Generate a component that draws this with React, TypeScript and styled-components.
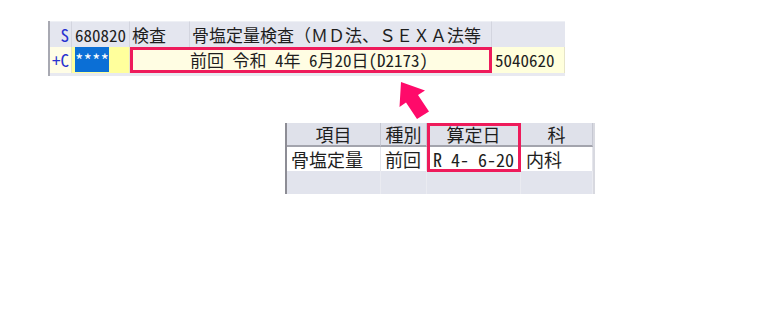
import React from "react";
import styled, { createGlobalStyle } from "styled-components";

const Global = createGlobalStyle`
  html, body { margin: 0; padding: 0; background: #ffffff; }
  body { font-family: "Noto Sans CJK JP", "Noto Sans", sans-serif; }
`;

const Page = styled.div`
  display: flex;
  flex-direction: column;
  width: 771px;
  height: 318px;
  padding-top: 21px;
  box-sizing: border-box;
  font-family: "Noto Sans CJK JP", sans-serif;
  font-feature-settings: "hwid";
  color: #1e1e1e;
`;

const TopGrid = styled.div`
  display: grid;
  grid-template-columns: 22px 58px 60px 302px 73px;
  grid-template-rows: 26px 26px 3px;
  margin-left: 48px;
  width: 517px;
  border-left: 2px solid #a8a9b2;
  font-size: 17px;
  line-height: 26px;
`;

const HeadCell = styled.div<{ $align?: string; $color?: string; $pad?: number; $last?: boolean; $fullwidth?: boolean }>`
  background: #e4e6ef;
  border-top: 1px solid #eef0f5;
  border-right: ${(p) => (p.$last ? "none" : "1px solid #d3d5df")};
  text-align: ${(p) => p.$align || "left"};
  color: ${(p) => p.$color || "#1e1e1e"};
  padding: 0 ${(p) => (p.$align === "right" ? 2 : 0)}px 0 ${(p) => p.$pad ?? 3}px;
  font-feature-settings: ${(p) => (p.$fullwidth ? "normal" : "\"hwid\"")};
  white-space: pre;
  overflow: hidden;
  line-height: 25px;
`;

const Cell = styled.div<{ $bg: string; $align?: string; $color?: string; $pad?: number }>`
  background: ${(p) => p.$bg};
  text-align: ${(p) => p.$align || "left"};
  color: ${(p) => p.$color || "#1e1e1e"};
  padding: 0 ${(p) => (p.$align === "right" ? 2 : 0)}px 0 ${(p) => p.$pad ?? 3}px;
  white-space: pre;
  overflow: hidden;
  border-right: 1px solid #e6e4c8;
`;

const Selected = styled.span`
  background: #0b6fd6;
  color: #ffffff;
`;

const MarkedCell = styled.div`
  grid-column: 3 / 5;
  background: #fffde3;
  border: 3px solid #ee1b5b;
  box-sizing: border-box;
  padding-left: 57px;
  line-height: 20px;
  white-space: pre;
`;

const Strip = styled.div`
  grid-column: 1 / 6;
  background: #e8e9f0;
`;

const ArrowRow = styled.div`
  height: 47px;
  padding: 3px 0 0 396px;
  box-sizing: border-box;
`;

const BottomWrap = styled.div`
  margin-left: 285px;
  display: flex;
`;

const BottomGrid = styled.div`
  display: grid;
  grid-template-columns: 94px 46px 94px 72px;
  grid-template-rows: 24px 24px 23px;
  border-left: 2px solid #8d8d95;
  font-size: 18px;
  line-height: 24px;
`;

const RightEdge = styled.div`
  width: 2px;
  height: 71px;
  background: #d8d9e0;
`;

const ColHead = styled.div<{ $col: number }>`
  grid-row: 1;
  grid-column: ${(p) => p.$col};
  background: #dfe1ea;
  border-bottom: 2px solid #a3a4ad;
  border-right: 1px solid #c6c8d2;
  text-align: center;
  line-height: 22px;
  box-sizing: border-box;
`;

const DataCell = styled.div<{ $col: number; $pad?: number }>`
  grid-row: 2;
  grid-column: ${(p) => p.$col};
  background: #ffffff;
  border-right: 1px solid #e5e6ec;
  padding-left: ${(p) => p.$pad ?? 3}px;
  white-space: pre;
  overflow: hidden;
`;

const EmptyCell = styled.div<{ $col: number }>`
  grid-row: 3;
  grid-column: ${(p) => p.$col};
  background: #e2e4ed;
  border-right: 1px solid #eaebf1;
`;

const Highlight = styled.div`
  grid-row: 1 / 3;
  grid-column: 3;
  border: 3px solid #ee1b5b;
  margin-bottom: -1px;
  z-index: 1;
  pointer-events: none;
`;

const Arrow = () => (
  <svg width="36" height="43" viewBox="0 0 36 43">
    <polygon
      points="5,3 29,11.5 22,16 33,32.5 21,40 10,23.5 3.5,28"
      fill="#ff0a6a"
    />
  </svg>
);

export default function App() {
  return (
    <>
      <Global />
      <Page>
        <TopGrid>
          <HeadCell $align="right" $color="#2a32d0" $pad={0}>S</HeadCell>
          <HeadCell>680820</HeadCell>
          <HeadCell $pad={2}>検査</HeadCell>
          <HeadCell $pad={2} $fullwidth>骨塩定量検査（ＭＤ法、ＳＥＸＡ法等</HeadCell>
          <HeadCell $last />

          <Cell $bg="#fffde6" $align="right" $color="#2a32d0" $pad={0}>+C</Cell>
          <Cell $bg="#ffff9c">
            <Selected>****</Selected>
          </Cell>
          <MarkedCell>{"前回 令和 4年 6月20日(D2173)"}</MarkedCell>
          <Cell $bg="#ffffdc">5040620</Cell>
          <Strip />
        </TopGrid>

        <ArrowRow>
          <Arrow />
        </ArrowRow>

        <BottomWrap>
          <BottomGrid>
            <ColHead $col={1}>項目</ColHead>
            <ColHead $col={2}>種別</ColHead>
            <ColHead $col={3}>算定日</ColHead>
            <ColHead $col={4}>科</ColHead>

            <DataCell $col={1} $pad={4}>骨塩定量</DataCell>
            <DataCell $col={2} $pad={4}>前回</DataCell>
            <DataCell $col={3} $pad={6}>R 4- 6-20</DataCell>
            <DataCell $col={4} $pad={5}>内科</DataCell>

            <EmptyCell $col={1} />
            <EmptyCell $col={2} />
            <EmptyCell $col={3} />
            <EmptyCell $col={4} />

            <Highlight />
          </BottomGrid>
          <RightEdge />
        </BottomWrap>
      </Page>
    </>
  );
}
